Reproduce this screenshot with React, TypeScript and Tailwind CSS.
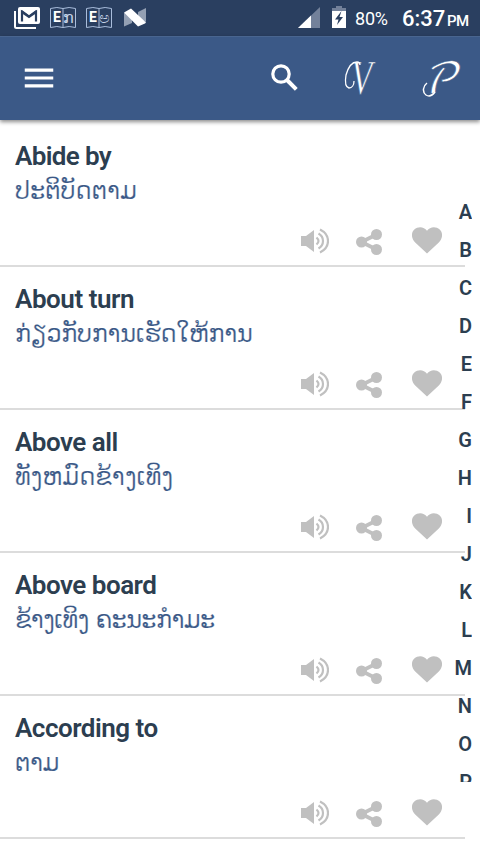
import { MdMenu } from "react-icons/md";

interface Phrase {
  english: string;
  lao: string;
  titleTracking: string;
  tracking: string;
}

const PHRASES: Phrase[] = [
  { english: "Abide by", lao: "ປະຕິບັດຕາມ", titleTracking: "tracking-[-0.65px]", tracking: "tracking-normal" },
  { english: "About turn", lao: "ກ່ຽວກັບການເຮັດໃຫ້ການ", titleTracking: "tracking-[-0.45px]", tracking: "tracking-[-0.3px]" },
  { english: "Above all", lao: "ທັງຫມົດຂ້າງເທິງ", titleTracking: "tracking-[-0.5px]", tracking: "tracking-[0.1px]" },
  { english: "Above board", lao: "ຂ້າງເທິງ ຄະນະກໍາມະ", titleTracking: "tracking-[-0.5px]", tracking: "tracking-[-0.6px]" },
  { english: "According to", lao: "ຕາມ", titleTracking: "tracking-[-0.5px]", tracking: "tracking-[-0.4px]" },
];

const LETTERS = "ABCDEFGHIJKLMNOP".split("");

function MailIcon() {
  return (
    <svg width="26" height="22" viewBox="0 0 26 22" fill="none">
      <path d="M1 4v15.5a1.5 1.5 0 0 0 1.500 1.500H22" stroke="#fff" strokeWidth="2" />
      <rect x="4" y="0" width="22" height="17" rx="2" fill="#fff" />
      <path d="M8 14.500V5l7 5 7-5v9.500" stroke="#2a3f60" strokeWidth="2.200" />
      <path d="M7.500 3.500L15 9l7.500-5.500" stroke="#2a3f60" strokeWidth="1.500" />
    </svg>
  );
}

function BookIcon({ letter }: { letter: string }) {
  return (
    <div className="relative h-[22px] w-[26px]">
      <svg width="26" height="22" viewBox="0 0 26 22" fill="none" stroke="#a9bddb">
        <path d="M.5 1.500Q7-.5 13 1.500Q19-.5 25.500 1.500V20.500Q19 18.500 13 20.500Q7 18.500 .5 20.500ZM13 1.500v19" />
      </svg>
      <span className="absolute left-[3px] top-[3px] font-['Roboto',sans-serif] text-[14px] leading-[14px] font-bold text-white">E</span>
      <span className="absolute left-[13px] top-[3px] font-['DejaVu_Sans',sans-serif] text-[16px] leading-[16px] text-[#c5d3e8]">{letter}</span>
    </div>
  );
}

function NougatIcon() {
  return (
    <svg width="22" height="19" viewBox="0 0 22 19">
      <path d="M0 5h8v10l-8 3.500zM14 4l8-4v14l-8-3z" fill="#94a0b3" />
      <path d="M0 4.500L7 .5l15 14-1 1-7 3z" fill="#fff" />
    </svg>
  );
}

function SignalIcon() {
  return (
    <svg width="22" height="21" viewBox="0 0 22 21">
      <path d="M0 21L22 0v21z" fill="#73819a" />
      <path d="M0 21L13 8.600V21z" fill="#fff" />
    </svg>
  );
}

function BatteryIcon() {
  return (
    <svg width="14" height="22" viewBox="0 0 14 22">
      <path d="M4 0h6v2h4v4H0V2h4z" fill="#73819a" />
      <path d="M0 5h14v17H0z" fill="#fff" />
      <path d="M9.500 5L3 13.500h3.500L5 19l6-8H7.500z" fill="#2a3f60" />
    </svg>
  );
}

function SearchIcon() {
  return (
    <svg width="27" height="27" viewBox="0 0 27 27" fill="none" stroke="#fff">
      <circle cx="10" cy="10" r="8.200" strokeWidth="3.200" />
      <path d="M16 16l9.300 9.300" strokeWidth="4" />
    </svg>
  );
}

function SpeakerIcon() {
  return (
    <svg width="28" height="26" viewBox="0 0 28 26" fill="none">
      <path d="M0 8h5l8-6v22l-8-6H0z" fill="#c0c0c0" />
      <g stroke="#c0c0c0" strokeWidth="2.200">
        <path d="M15.500 9.500q4 3.500 0 7" />
        <path d="M17.500 5.500q4.500 2.700 4.500 7.500t-4.500 7.500" />
        <path d="M19 1.500q8 4 8 11.500t-8 11.500" />
      </g>
    </svg>
  );
}

function ShareIcon() {
  return (
    <svg width="26" height="26" viewBox="0 0 26 26" fill="#c0c0c0">
      <path d="M20.500 5.500L5.500 13l15 7.500" fill="none" stroke="#c0c0c0" strokeWidth="3.800" />
      <circle cx="20.500" cy="5.500" r="5.500" />
      <circle cx="5.500" cy="13" r="5.500" />
      <circle cx="20.500" cy="20.500" r="5.500" />
    </svg>
  );
}

function HeartIcon() {
  return (
    <svg width="30" height="27" viewBox="0 0 30 27" fill="#c0c0c0">
      <path d="M15 26.500L3.200 15.500C-1 11.500-1 5.500 2.300 2.400C6-.9 12-.7 15 3.800C18-.7 24-.9 27.700 2.400C31 5.500 31 11.500 26.800 15.500z" />
    </svg>
  );
}

function StatusBar() {
  return (
    <div className="flex h-9 justify-between bg-[#2a3f60] pl-[14px] pr-[11px] text-white">
      <div className="flex pt-[7px]">
        <MailIcon />
        <div className="ml-[10px] flex gap-[10px]">
          <BookIcon letter="ກ" />
          <BookIcon letter="ಅ" />
        </div>
        <div className="ml-3 pt-[1px]">
          <NougatIcon />
        </div>
      </div>
      <div className="flex items-start pt-[6px]">
        <div className="pt-[1px]">
          <SignalIcon />
        </div>
        <div className="ml-3">
          <BatteryIcon />
        </div>
        <span className="ml-[9px] w-[34px] text-[18px] leading-[26px] tracking-[-0.2px]">80%</span>
        <span className="ml-[13px] w-[41px] text-[22px] leading-[26px] font-medium">6:37</span>
        <span className="ml-1 w-[22px] pt-[2px] text-[15px] leading-[26px] font-medium tracking-[-0.5px]">PM</span>
      </div>
    </div>
  );
}

// Each letter is thinned by an outline in the bar colour and gets a swash
function VocabularyButton() {
  return (
    <button className="relative h-10 w-10">
      <span className="absolute left-[9px] top-0 origin-left scale-x-[0.72] font-['Liberation_Serif',serif] text-[48px] leading-[40px] italic [-webkit-text-stroke:0.7px_#3b5987]">V</span>
      <svg className="absolute left-0 top-0" width="40" height="40" fill="none" stroke="#fff" strokeWidth="1.300">
        <path d="M12 23C12 27 10 30 7 30C3 29 3 23 4 17C6 10 10 4 15 4C17 4 18 5 18 7" />
      </svg>
    </button>
  );
}

function PhrasesButton() {
  return (
    <button className="relative h-10 w-10">
      <span className="absolute left-[3px] top-[3px] -skew-x-12 font-['DejaVu_Math_TeX_Gyre','DejaVu_Serif',serif] text-[42px] leading-[40px] [-webkit-text-stroke:0.6px_#3b5987]">𝒫</span>
      <svg className="absolute left-0 top-0" width="40" height="40" fill="none" stroke="#fff" strokeWidth="1.500">
        <path d="M13 34C10 38 7 39 4 37C0 34 1 28 5 25" />
      </svg>
    </button>
  );
}

function Toolbar() {
  return (
    <header className="relative z-10 flex h-[84px] items-center justify-between border-t border-[#49658f] bg-[#3b5987] pb-[2px] pl-5 pr-[18px] text-white shadow-[0_2px_4px_rgba(0,0,0,0.45)]">
      <MdMenu size={38} />
      <div className="flex items-center">
        <SearchIcon />
        <div className="ml-[44px] flex gap-10">
          <VocabularyButton />
          <PhrasesButton />
        </div>
      </div>
    </header>
  );
}

function PhraseRow({ phrase }: { phrase: Phrase }) {
  return (
    <li className="flex h-[143px] flex-col border-b-2 border-[#dcdcdc] pl-[15px] pt-[17px]">
      <h2 className={`text-[26px] leading-[30px] font-semibold text-[#2c3e50] ${phrase.titleTracking}`}>{phrase.english}</h2>
      <p className={`pt-[2px] font-['DejaVu_Sans',sans-serif] text-[24px] leading-[36px] whitespace-nowrap text-[#3b5987] [-webkit-text-stroke:0.2px_#fff] ${phrase.tracking}`}>
        {phrase.lao}
      </p>
      <div className="mt-[18px] flex h-[28px] pl-[286px]">
        <div className="pt-[1px]">
          <SpeakerIcon />
        </div>
        <div className="ml-[27px] pt-[2px]">
          <ShareIcon />
        </div>
        <div className="ml-[30px]">
          <HeartIcon />
        </div>
      </div>
    </li>
  );
}

export default function App() {
  return (
    <div className="flex h-[854px] w-[480px] flex-col overflow-hidden bg-white font-['Roboto',sans-serif]">
      <StatusBar />
      <Toolbar />
      <main className="relative flex-1 pt-1">
        <ul className="w-[465px]">
          {PHRASES.map((phrase) => (
            <PhraseRow key={phrase.english} phrase={phrase} />
          ))}
        </ul>
        {/* Fast-scroll index floats over the list and cuts off mid letter */}
        <nav className="absolute right-2 top-[73px] flex h-[589px] flex-col overflow-hidden text-right">
          {LETTERS.map((letter) => (
            <span key={letter} className="h-[38px] shrink-0 text-[20px] leading-[38px] font-semibold text-[#2c3e50]">
              {letter}
            </span>
          ))}
        </nav>
      </main>
    </div>
  );
}
